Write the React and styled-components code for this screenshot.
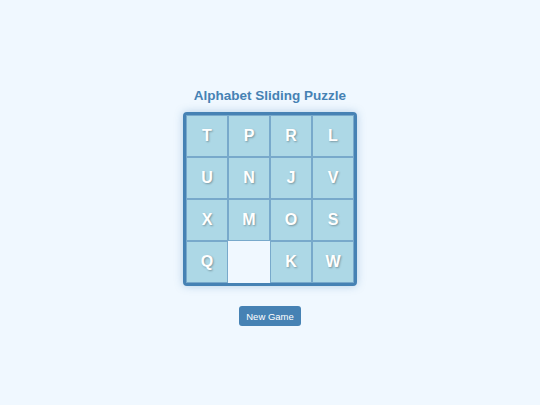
import React, { useState } from "react";
import styled, { createGlobalStyle } from "styled-components";

const GlobalStyle = createGlobalStyle`
  body {
    margin: 0;
    background: #f0f8ff;
    font-family: "Liberation Sans", Arial, sans-serif;
  }
`;

const start = ["T", "P", "R", "L", "U", "N", "J", "V", "X", "M", "O", "S", "Q", "", "K", "W"];

function App() {
  const [tiles] = useState(start);

  return (
    <Page>
      <GlobalStyle />
      <Title>Alphabet Sliding Puzzle</Title>
      <Board>
        {tiles.map((t, i) => (
          <Tile key={i} empty={t === ""}>
            {t}
          </Tile>
        ))}
      </Board>
      <Button type="button">New Game</Button>
    </Page>
  );
}

export default App;

const Page = styled.div`
  display: flex;
  flex-direction: column;
  align-items: center;
  padding-top: 88px;
`;

const Title = styled.h1`
  margin: 0 0 8px;
  font-size: 13.5px;
  font-weight: bold;
  color: #4682b4;
  line-height: 16px;
`;

const Board = styled.div`
  display: grid;
  grid-template-columns: repeat(4, 42px);
  grid-template-rows: repeat(4, 42px);
  border: 3px solid #4682b4;
  border-radius: 4px;
  box-shadow: 0 0 8px rgba(70, 130, 180, 0.35);
  background: #add8e6;
`;

const Tile = styled.div`
  box-sizing: border-box;
  display: flex;
  align-items: center;
  justify-content: center;
  border: 1px solid ${(p) => (p.empty ? "#f0f8ff" : "#78a9cb")};
  background: ${(p) => (p.empty ? "#f0f8ff" : "#add8e6")};
  color: #fff;
  font-size: 16px;
  font-weight: bold;
  text-shadow: 1px 1px 2px rgba(0, 0, 0, 0.3);
`;

const Button = styled.button`
  margin-top: 20px;
  width: 62px;
  height: 20px;
  padding: 0;
  border: none;
  border-radius: 3px;
  background: #4682b4;
  color: #fff;
  font-family: "Liberation Sans", Arial, sans-serif;
  font-size: 9.5px;
  cursor: pointer;
`;
